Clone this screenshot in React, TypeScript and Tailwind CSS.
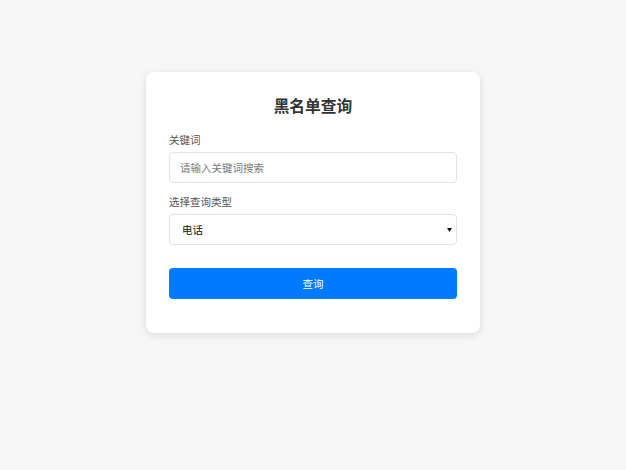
import { useState } from "react";

export default function App() {
    const [keyword, setKeyword] = useState("");
    const [type, setType] = useState("phone");

    return (
        <div
            className="min-h-screen bg-[#f7f7f7] pt-[72px]"
            style={{ fontFamily: '"Noto Sans CJK SC", "Liberation Sans", sans-serif' }}
        >
            <div className="mx-auto w-[334px] rounded-lg bg-white px-[23px] pt-[22px] pb-[34px] shadow-[0_2px_8px_rgba(0,0,0,0.12)]">
                <h2 className="h-[24px] text-center text-[15.75px] font-bold leading-[24px] text-[#333]">
                    黑名单查询
                </h2>

                <label htmlFor="keyword" className="mt-[13px] block text-[10.5px] leading-[18px] text-[#555]">
                    关键词
                </label>
                <input
                    id="keyword"
                    value={keyword}
                    onChange={(e) => setKeyword(e.target.value)}
                    placeholder="请输入关键词搜索"
                    className="mt-[3px] block h-[31px] w-full rounded-[4px] border border-[#e3e3e3] bg-white px-[10px] text-[10.5px] text-[#333] placeholder:text-[#777] outline-none"
                />

                <label htmlFor="type" className="mt-[10px] block text-[10.5px] leading-[18px] text-[#555]">
                    选择查询类型
                </label>
                <div className="relative mt-[3px]">
                    <select
                        id="type"
                        value={type}
                        onChange={(e) => setType(e.target.value)}
                        className="block h-[31px] w-full appearance-none rounded-[4px] border border-[#e3e3e3] bg-white pl-[12px] pr-[20px] text-[10.5px] text-[#111] outline-none"
                    >
                        <option value="phone">电话</option>
                        <option value="name">姓名</option>
                        <option value="idcard">身份证</option>
                    </select>
                    {/* small native-style arrow */}
                    <svg
                        className="pointer-events-none absolute right-[5px] top-1/2 -translate-y-1/2"
                        width="5"
                        height="4"
                        viewBox="0 0 5 4"
                    >
                        <path d="M0 0H5L2.5 4Z" fill="#111" />
                    </svg>
                </div>

                <button
                    type="button"
                    className="mt-[23px] block h-[31px] w-full rounded-[4px] bg-[#007bff] text-[10.5px] text-white"
                >
                    查询
                </button>
            </div>
        </div>
    );
}
